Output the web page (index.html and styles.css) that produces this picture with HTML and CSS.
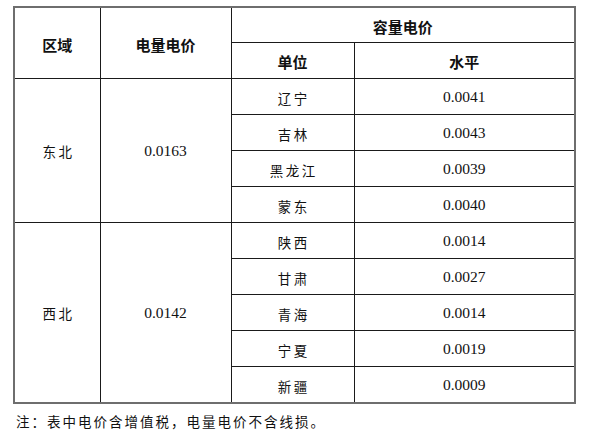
FILE: index.html
```html
<!DOCTYPE html>
<html lang="zh">
<head>
<meta charset="utf-8">
<link rel="stylesheet" href="styles.css">
</head>
<body>
<div class="page">
<table class="price">
  <colgroup>
    <col class="c1"><col class="c2"><col class="c3"><col class="c4">
  </colgroup>
  <thead>
    <tr class="h1">
      <th rowspan="2">区域</th>
      <th rowspan="2">电量电价</th>
      <th colspan="2">容量电价</th>
    </tr>
    <tr class="h2">
      <th>单位</th>
      <th>水平</th>
    </tr>
  </thead>
  <tbody>
    <tr><td rowspan="4" class="zh big">东北</td><td rowspan="4" class="num">0.0163</td><td class="zh">辽宁</td><td class="num">0.0041</td></tr>
    <tr><td class="zh">吉林</td><td class="num">0.0043</td></tr>
    <tr><td class="zh">黑龙江</td><td class="num">0.0039</td></tr>
    <tr><td class="zh">蒙东</td><td class="num">0.0040</td></tr>
    <tr><td rowspan="5" class="zh big">西北</td><td rowspan="5" class="num">0.0142</td><td class="zh">陕西</td><td class="num">0.0014</td></tr>
    <tr><td class="zh">甘肃</td><td class="num">0.0027</td></tr>
    <tr><td class="zh">青海</td><td class="num">0.0014</td></tr>
    <tr><td class="zh">宁夏</td><td class="num">0.0019</td></tr>
    <tr><td class="zh">新疆</td><td class="num">0.0009</td></tr>
  </tbody>
</table>
<p class="note">注：表中电价含增值税，电量电价不含线损。</p>
</div>
</body>
</html>
```
FILE: styles.css
```css
html, body {
  margin: 0;
  padding: 0;
  background: #ffffff;
}
.page {
  padding: 6px 0 0 13px;
}
.price {
  border-collapse: collapse;
  table-layout: fixed;
  width: 561px;
  border: 2px solid #6e6e6e;
  color: #111;
}
.c1 { width: 86px; }
.c2 { width: 131px; }
.c3 { width: 123px; }
.c4 { width: 221px; }
.price th, .price td {
  border: 1px solid #1a1a1a;
  padding: 0;
  text-align: center;
  vertical-align: middle;
  height: 35px;
}
.price th {
  font-family: "Noto Sans CJK SC", sans-serif;
  font-weight: 700;
  font-size: 15px;
  line-height: 20px;
  padding-top: 3px;
  height: 31px;
}
.price .h2 th {
  height: 32px;
}
.price td.zh {
  font-family: "Noto Sans CJK SC", sans-serif;
  font-weight: 400;
  font-size: 13.5px;
  letter-spacing: 2.5px;
  padding-left: 2.5px;
  padding-top: 3px;
  height: 32px;
}
.price td.zh.big {
  padding-top: 0;
}
.price td.num {
  font-family: "Liberation Serif", serif;
  font-size: 15.5px;
}
.note {
  margin: 7px 0 0 3px;
  font-family: "Noto Sans CJK SC", sans-serif;
  font-weight: 400;
  font-size: 13.5px;
  letter-spacing: 2px;
  color: #111;
}
```
